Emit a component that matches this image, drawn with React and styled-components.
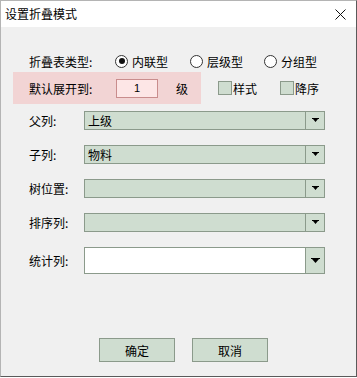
import React from 'react'
import styled, { createGlobalStyle } from 'styled-components'

const GlobalStyle = createGlobalStyle`
  html, body {
    margin: 0;
    padding: 0;
    background: #ffffff;
  }
  body {
    font-family: "Noto Sans CJK SC", "Noto Sans", sans-serif;
    font-size: 12px;
    color: #000;
  }
`

const Window = styled.div`
  width: 355px;
  height: 375px;
  border-top: 1px solid #b4b4b4;
  border-left: 1px solid #b4b4b4;
  border-right: 1px solid #5a5a5a;
  border-bottom: 1px solid #5a5a5a;
  box-shadow: 1px 1px 0 #9a9a9a;
  background: #f0f0f0;
  display: flex;
  flex-direction: column;
  box-sizing: content-box;
`

const TitleBar = styled.div`
  height: 26px;
  background: #fff;
  display: flex;
  align-items: center;
  justify-content: space-between;
  padding: 0 10px 0 4px;
`

const Title = styled.span`
  font-size: 12px;
  line-height: 1;
`

const Body = styled.div`
  display: flex;
  flex-direction: column;
  padding-top: 23px;
`

const TypeRow = styled.div`
  height: 22px;
  display: flex;
  align-items: center;
  padding-left: 28px;
`

const Label = styled.span`
  width: ${p => p.$w || 55}px;
  flex: none;
  white-space: nowrap;
`

const RadioItem = styled.label`
  display: flex;
  align-items: center;
  gap: 4px;
  margin-right: ${p => p.$mr || 0}px;
`

const RadioCircle = styled.span`
  width: 11px;
  height: 11px;
  border: 1px solid #333;
  border-radius: 50%;
  background: #fff;
  display: flex;
  align-items: center;
  justify-content: center;
  &::after {
    content: '';
    width: 6px;
    height: 6px;
    border-radius: 50%;
    background: ${p => (p.$on ? '#111' : 'transparent')};
  }
`

const LevelRow = styled.div`
  display: flex;
  align-items: center;
  height: 32px;
`

const Pink = styled.div`
  width: 172px;
  height: 32px;
  margin-left: 12px;
  padding-left: 16px;
  background: #f2d4d4;
  display: flex;
  align-items: center;
`

const LevelInput = styled.div`
  width: 40px;
  height: 17px;
  border: 1px solid #c98d8d;
  background: #fde6e6;
  display: flex;
  align-items: center;
  justify-content: center;
  margin-left: 16px;
  font-family: "Liberation Sans", sans-serif;
  font-size: 11px;
`

const Unit = styled.span`
  margin-left: 18px;
`

const CheckItem = styled.label`
  display: flex;
  align-items: center;
  margin-left: ${p => p.$ml}px;
`

const CheckBox = styled.span`
  width: 12px;
  height: 12px;
  border: 1px solid #8b9a8b;
  background: #cfddd0;
  margin-right: 1px;
`

const Fields = styled.div`
  display: flex;
  flex-direction: column;
  gap: 15px;
  margin-top: 7px;
  padding-left: 28px;
`

const FieldRow = styled.div`
  display: flex;
  align-items: center;
  height: ${p => p.$h}px;
`

const Combo = styled.div`
  width: 239px;
  height: ${p => p.$h - 2}px;
  border: 1px solid #8b9a8b;
  background: ${p => (p.$white ? '#ffffff' : '#cfddd0')};
  display: flex;
  align-items: stretch;
`

const ComboText = styled.span`
  flex: 1;
  padding-left: 3px;
  display: flex;
  align-items: center;
`

const DropBtn = styled.span`
  width: 18px;
  border-left: 1px solid #8b9a8b;
  background: #cfddd0;
  display: flex;
  align-items: center;
  justify-content: center;
`

const Buttons = styled.div`
  display: flex;
  gap: 17px;
  padding-left: 98px;
  margin-top: 64px;
`

const Button = styled.button`
  width: 76px;
  height: 24px;
  border: 1px solid #8b9a8b;
  background: #cfddd0;
  font-family: "Noto Sans CJK SC", sans-serif;
  font-size: 12px;
  color: #000;
  padding: 0;
`

const Arrow = ({ big }) => (
  <svg width={big ? 9 : 7} height={big ? 6 : 5} viewBox={big ? '0 0 9 6' : '0 0 7 5'}>
    {big ? (
      <path d="M0 0h9v1H0z M1 1h7l-3.5 4z" fill="#000" />
    ) : (
      <path d="M0 0h7v1H0z M1 1h5l-2.5 3z" fill="#000" />
    )}
  </svg>
)

const CloseIcon = () => (
  <svg width="11" height="11" viewBox="0 0 11 11">
    <path d="M0.5 0.5L10.5 10.5M10.5 0.5L0.5 10.5" stroke="#111" strokeWidth="1" />
  </svg>
)

const fields = [
  { label: '父列:', value: '上级' },
  { label: '子列:', value: '物料' },
  { label: '树位置:', value: '' },
  { label: '排序列:', value: '' },
]

export default function App() {
  return (
    <>
      <GlobalStyle />
      <Window>
        <TitleBar>
          <Title>设置折叠模式</Title>
          <CloseIcon />
        </TitleBar>
        <Body>
          <TypeRow>
            <Label $w={86}>折叠表类型:</Label>
            <RadioItem $mr={22}>
              <RadioCircle $on />
              内联型
            </RadioItem>
            <RadioItem $mr={21}>
              <RadioCircle />
              层级型
            </RadioItem>
            <RadioItem>
              <RadioCircle />
              分组型
            </RadioItem>
          </TypeRow>
          <LevelRow>
            <Pink>
              <Label $w={71}>默认展开到:</Label>
              <LevelInput>1</LevelInput>
              <Unit>级</Unit>
            </Pink>
            <CheckItem $ml={17}>
              <CheckBox />
              样式
            </CheckItem>
            <CheckItem $ml={23}>
              <CheckBox />
              降序
            </CheckItem>
          </LevelRow>
          <Fields>
            {fields.map(f => (
              <FieldRow key={f.label} $h={19}>
                <Label>{f.label}</Label>
                <Combo $h={19}>
                  <ComboText>{f.value}</ComboText>
                  <DropBtn>
                    <Arrow />
                  </DropBtn>
                </Combo>
              </FieldRow>
            ))}
            <FieldRow $h={27}>
              <Label>统计列:</Label>
              <Combo $h={27} $white>
                <ComboText />
                <DropBtn>
                  <Arrow big />
                </DropBtn>
              </Combo>
            </FieldRow>
          </Fields>
          <Buttons>
            <Button>确定</Button>
            <Button>取消</Button>
          </Buttons>
        </Body>
      </Window>
    </>
  )
}
